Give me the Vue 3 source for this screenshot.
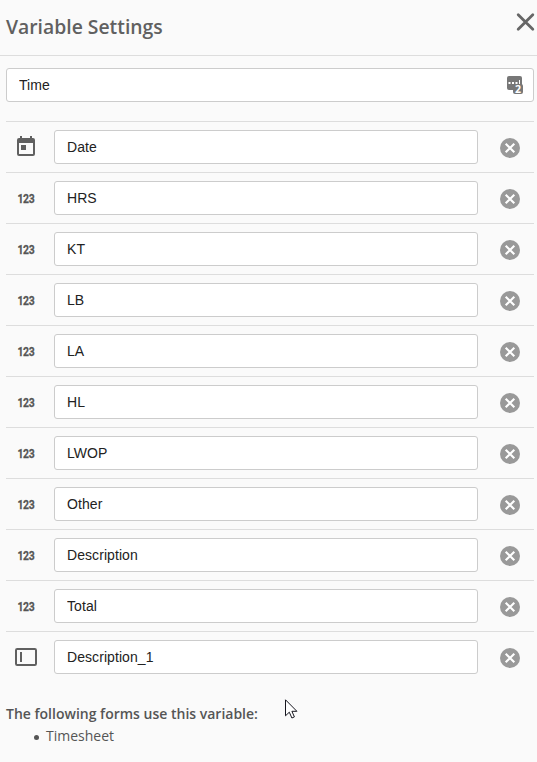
<script setup>
import { ref } from 'vue'

const name = ref('Time')
const fields = ref([
  { type: 'date', label: 'Date' },
  { type: 'number', label: 'HRS' },
  { type: 'number', label: 'KT' },
  { type: 'number', label: 'LB' },
  { type: 'number', label: 'LA' },
  { type: 'number', label: 'HL' },
  { type: 'number', label: 'LWOP' },
  { type: 'number', label: 'Other' },
  { type: 'number', label: 'Description' },
  { type: 'number', label: 'Total' },
  { type: 'text', label: 'Description_1' },
])
const forms = ['Timesheet']
</script>

<template>
  <main class="panel">
    <header class="header">
      <h1 class="title">Variable Settings</h1>
      <button class="close" aria-label="Close">
        <svg width="20" height="20" viewBox="0 0 20 20">
          <path d="M3.2 2.7 17.8 17.3M17.8 2.7 3.2 17.3" stroke="#666" stroke-width="2.8" stroke-linecap="round" />
        </svg>
      </button>
    </header>

    <div class="body">
      <div class="name-field">
        <input v-model="name" class="input" />
        <svg class="manager" width="17" height="19" viewBox="0 0 17 19">
          <rect x="0" y="0" width="15" height="14" rx="2" fill="#777" />
          <path d="M1.5 6h2v2h-2zM5 6h2v2H5zM8.5 6h2v2h-2zM12 4h1v4h-1z" fill="#fff" />
          <rect x="6" y="8" width="10" height="10" rx="2" fill="#777" />
          <text x="11" y="16.7" text-anchor="middle" class="badge">2</text>
        </svg>
      </div>

      <ul class="rows">
        <li v-for="(field, i) in fields" :key="i" class="row">
          <span class="type">
            <svg v-if="field.type === 'date'" class="calendar" width="18" height="20" viewBox="0 0 18 20">
              <path
                fill-rule="evenodd"
                fill="#606060"
                d="M3 0h2v2h8V0h2v2h1a2 2 0 0 1 2 2v14a2 2 0 0 1-2 2H2a2 2 0 0 1-2-2V4a2 2 0 0 1 2-2h1zM2 7v11h14V7zM4 9h5v5H4z"
              />
            </svg>
            <svg v-else-if="field.type === 'number'" class="number" width="20" height="18" viewBox="0 0 20 18">
              <text class="digits" x="1.8" y="14" transform="scale(0.77 1)">123</text>
            </svg>
            <svg v-else width="22" height="18" viewBox="0 0 22 18">
              <rect x="1" y="1" width="20" height="16" rx="1.2" fill="none" stroke="#606060" stroke-width="2" />
              <rect x="5" y="4" width="2" height="10" fill="#606060" />
            </svg>
          </span>
          <input v-model="field.label" class="input" />
          <button class="remove" aria-label="Remove">
            <svg width="20" height="20" viewBox="0 0 20 20">
              <circle cx="10" cy="10" r="10" fill="#999" />
              <path d="M5.7 5.7 14.3 14.3M14.3 5.7 5.7 14.3" stroke="#fff" stroke-width="2.1" />
            </svg>
          </button>
        </li>
      </ul>

      <section class="usage">
        <h2 class="usage-title">The following forms use this variable:</h2>
        <ul class="forms">
          <li v-for="form in forms" :key="form" class="form"><i class="dot"></i>{{ form }}</li>
        </ul>
      </section>
    </div>

    <svg class="cursor" width="13" height="21" viewBox="0 0 13 21">
      <path d="M.5.8v16l3.8-3.6 2.6 5.8 2.5-1.1-2.5-5.6h5z" fill="#fff" stroke="#16161f" stroke-width="1" />
    </svg>
  </main>
</template>

<style>
body {
  background: #fafafa;
}
</style>

<style scoped>
.panel {
  box-sizing: border-box;
  height: 762px;
  position: relative;
  overflow: hidden;
  background: #fafafa;
  color: #555;
  font-family: 'Open Sans', sans-serif;
}
.header {
  box-sizing: border-box;
  height: 56px;
  display: flex;
  justify-content: space-between;
  align-items: flex-start;
  padding: 12px 2px 0 6px;
  border-bottom: 1px solid #ddd;
}
.title {
  margin: 1px 0 0;
  font-size: 19.35px;
  line-height: 28px;
  font-weight: 600;
  color: #606060;
}
button {
  display: block;
  padding: 0;
  border: 0;
  background: none;
}
svg {
  display: block;
  fill: none;
  overflow: visible;
}
.body {
  padding: 12px 3px 0 6px;
}
.name-field {
  position: relative;
  display: flex;
  margin-bottom: 19px;
}
.input {
  box-sizing: border-box;
  flex: 1;
  min-width: 0;
  height: 34px;
  padding: 0 12px;
  border: 1px solid #ccc;
  border-radius: 3px;
  background: #fff;
  color: #222;
  font: 14px 'Liberation Sans', Arial, sans-serif;
  letter-spacing: 0.07px;
  outline: none;
}
.manager {
  position: absolute;
  right: 10px;
  top: 8px;
}
.badge {
  font: bold 10.5px 'Open Sans', sans-serif;
  fill: #fff;
}
.rows {
  list-style: none;
  margin: 0;
  padding: 0;
}
.row {
  box-sizing: border-box;
  height: 51px;
  display: flex;
  align-items: center;
  border-top: 1px solid #ddd;
}
.type {
  width: 40px;
  margin-right: 8px;
  display: flex;
  justify-content: center;
}
.calendar {
  position: relative;
  top: -1px;
}
.digits {
  font: bold 13.5px 'Roboto', sans-serif;
  letter-spacing: -0.4px;
  fill: #555;
  stroke: #555;
  stroke-width: 0.3px;
}
.remove {
  margin: 2px 14px 0 22px;
}
.usage {
  padding-top: 21px;
}
.usage-title {
  margin: 0;
  font-size: 14px;
  line-height: 22px;
  font-weight: 600;
}
.forms {
  list-style: none;
  margin: 0;
  padding: 0 0 0 28px;
}
.form {
  display: flex;
  align-items: center;
  font-size: 14px;
  line-height: 22px;
}
.dot {
  width: 5px;
  height: 5px;
  margin: 2px 7px 0 0;
  border-radius: 50%;
  background: #555;
}
.cursor {
  position: absolute;
  left: 285px;
  top: 699px;
}
</style>
